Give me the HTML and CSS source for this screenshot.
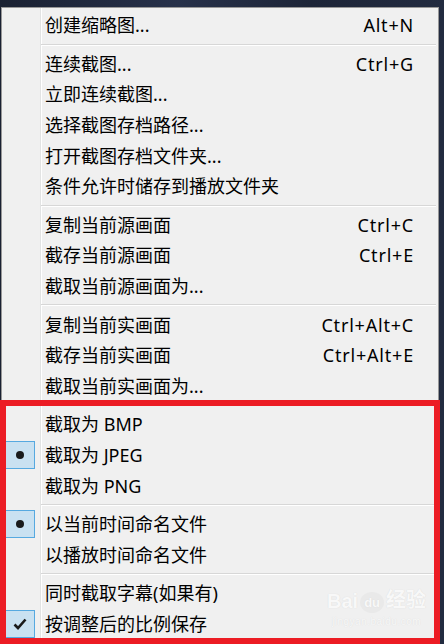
FILE: index.html
```html
<!DOCTYPE html>
<html>
<head>
    <title>截图菜单</title>
    <link rel="stylesheet" href="styles.css">
</head>
<body>
    <div class="menu">
        <div class="item"><span class="icon"></span><span class="label">创建缩略图...</span><span class="key">Alt+N</span></div>
        <div class="sep"></div>
        <div class="item"><span class="icon"></span><span class="label">连续截图...</span><span class="key">Ctrl+G</span></div>
        <div class="item"><span class="icon"></span><span class="label">立即连续截图...</span></div>
        <div class="item"><span class="icon"></span><span class="label">选择截图存档路径...</span></div>
        <div class="item"><span class="icon"></span><span class="label">打开截图存档文件夹...</span></div>
        <div class="item"><span class="icon"></span><span class="label">条件允许时储存到播放文件夹</span></div>
        <div class="sep"></div>
        <div class="item"><span class="icon"></span><span class="label">复制当前源画面</span><span class="key">Ctrl+C</span></div>
        <div class="item"><span class="icon"></span><span class="label">截存当前源画面</span><span class="key">Ctrl+E</span></div>
        <div class="item"><span class="icon"></span><span class="label">截取当前源画面为...</span></div>
        <div class="sep"></div>
        <div class="item"><span class="icon"></span><span class="label">复制当前实画面</span><span class="key">Ctrl+Alt+C</span></div>
        <div class="item"><span class="icon"></span><span class="label">截存当前实画面</span><span class="key">Ctrl+Alt+E</span></div>
        <div class="item"><span class="icon"></span><span class="label">截取当前实画面为...</span></div>
        <div class="sep"></div>
        <div class="item"><span class="icon"></span><span class="label">截取为 BMP</span></div>
        <div class="item"><span class="icon checked"><span class="dot"></span></span><span class="label">截取为 JPEG</span></div>
        <div class="item"><span class="icon"></span><span class="label">截取为 PNG</span></div>
        <div class="sep"></div>
        <div class="item"><span class="icon checked"><span class="dot"></span></span><span class="label">以当前时间命名文件</span></div>
        <div class="item"><span class="icon"></span><span class="label">以播放时间命名文件</span></div>
        <div class="sep"></div>
        <div class="item"><span class="icon"></span><span class="label">同时截取字幕(如果有)</span></div>
        <div class="item">
            <span class="icon checked">
                <svg width="14" height="12" viewBox="0 0 14 12"><path d="M1.5 6.5 L5 10 L12.5 1.5" fill="none" stroke="#1a1a1a" stroke-width="2.6"/></svg>
            </span>
            <span class="label">按调整后的比例保存</span>
        </div>

        <div class="watermark">
            <div class="wm-logo">Bai<span class="paw">du</span>经验</div>
            <div class="wm-url">jingyan.baidu.com</div>
        </div>
    </div>

    <div class="highlight"></div>
</body>
</html>
```

FILE: styles.css
```css
body {
    margin: 0;
    width: 444px;
    height: 644px;
    overflow: hidden;
    background: linear-gradient(90deg, #1a2132, #27314a 40%, #1d2538 70%, #222b40);
    font-family: "Noto Sans", "Noto Sans CJK SC", sans-serif;
    font-size: 18px;
    color: #000;
}
.menu {
    position: relative;
    margin: 7px 5px 0 1px;
    height: 660px;
    padding: 2px;
    border: 1px solid #979797;
    box-sizing: border-box;
    background: linear-gradient(90deg, #f0f0f0 38px, #e2e3e3 38px, #e2e3e3 39px, #fff 39px, #fff 40px, #f0f0f0 40px);
}
.item {
    display: flex;
    align-items: center;
    height: 30.6px;
    padding-right: 22px;
    line-height: 1;
}
.icon {
    width: 31px;
    height: 28px;
    margin-right: 10px;
    flex-shrink: 0;
    display: flex;
    align-items: center;
    justify-content: center;
    box-sizing: border-box;
}
.icon.checked {
    background-color: #c9e1f1;
    border: 1px solid #56a9e0;
}
.dot {
    width: 8px;
    height: 8px;
    border-radius: 50%;
    background-color: #1a1a1a;
}
.label {
    flex: 1;
    white-space: nowrap;
}
.key {
    white-space: nowrap;
    letter-spacing: 0.8px;
}
.sep {
    height: 8px;
    margin: 0 0 0 37px;
    display: flex;
    flex-direction: column;
    justify-content: center;
}
.sep::before {
    content: "";
    height: 1px;
    background-color: #d7d7d7;
    border-bottom: 1px solid #fff;
}
.watermark {
    position: absolute;
    left: 325px;
    top: 576px;
    color: #f8f8f8;
    text-shadow: 0 0 1px #d6d6d6;
    text-align: center;
}
.wm-logo {
    font-family: "Liberation Sans", "Noto Sans CJK SC", sans-serif;
    font-size: 20px;
    font-weight: bold;
    display: flex;
    align-items: flex-end;
}
.paw {
    font-size: 13px;
    border-radius: 50%;
    background-color: #e9e9e9;
    color: #f8f8f8;
    padding: 3px 4px;
    margin: 0 2px;
}
.wm-url {
    font-family: "Liberation Sans", sans-serif;
    font-size: 10px;
    letter-spacing: 0.5px;
    margin-top: 3px;
}
.highlight {
    position: absolute;
    left: 0;
    top: 400px;
    width: 440px;
    height: 244px;
    border: 6px solid #ec1c24;
    box-sizing: border-box;
}
```
